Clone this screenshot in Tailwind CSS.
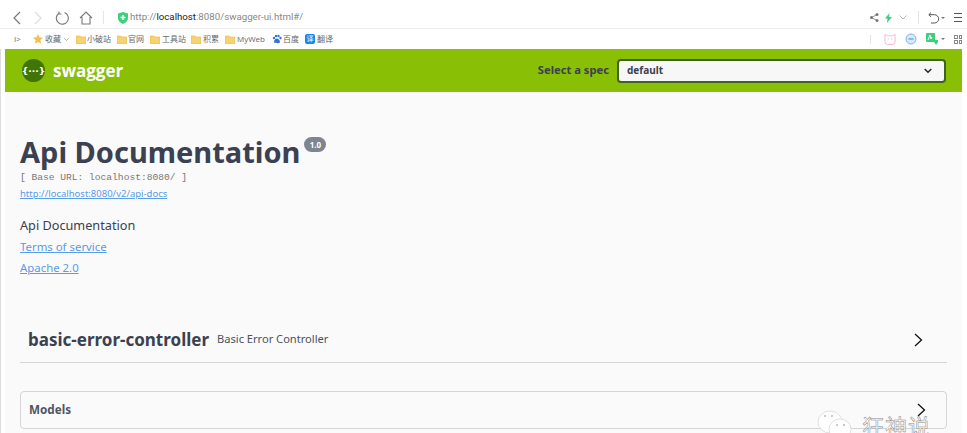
<!DOCTYPE html>
<html>
<head>
<meta charset="utf-8">
<title>Swagger UI</title>
<script src="https://cdn.jsdelivr.net/npm/@tailwindcss/browser@4"></script>
</head>
<body class="bg-white h-[433px] w-[967px] overflow-hidden relative font-['Open_Sans','Noto_Sans_CJK_SC',sans-serif]">
  <!-- browser toolbar -->
  <div class="h-[29px] flex items-center border-b border-[#eeeeee] pl-[12px] pr-[5px] pt-[7px]">
    <svg class="w-[10px] h-[14px] mr-[11px]" viewBox="0 0 10 14" fill="none" stroke="#777" stroke-width="1.2"><path d="M8 1 2 7l6 6"/></svg>
    <svg class="w-[10px] h-[14px] mr-[12px]" viewBox="0 0 10 14" fill="none" stroke="#ddd" stroke-width="1.2"><path d="M2 1l6 6-6 6"/></svg>
    <svg class="w-[14px] h-[14px] mr-[10px]" viewBox="0 0 14 14" fill="none" stroke="#777" stroke-width="1.1"><path d="M4 2.2A6 6 0 1 0 9.500 1.600M4 0.500v2.500h2.500"/></svg>
    <svg class="w-[14px] h-[14px] mr-[10px]" viewBox="0 0 14 14" fill="none" stroke="#777" stroke-width="1.1"><path d="M1 7 7 1l6 6M3 6v7h8V6"/></svg>
    <div class="w-px h-[13px] bg-[#e5e5e5] mr-[14px]"></div>
    <svg class="w-[10px] h-[12px] mr-[2px]" viewBox="0 0 10 12"><path d="M5 0 10 1.500V6c0 3-2.500 5-5 6-2.500-1-5-3-5-6V1.500z" fill="#3ccf7c"/><path d="M5 3v5M2.500 5.500h5" stroke="#fff" stroke-width="1.500"/></svg>
    <span class="text-[9.700px] text-[#888] font-['Roboto',sans-serif] whitespace-nowrap">http://<span class="text-[#222]">localhost</span>:8080/swagger-ui.html#/</span>
    <div class="ml-auto flex items-center">
      <svg class="w-[9px] h-[9px] mr-[6px]" viewBox="0 0 9 9" fill="#777"><circle cx="7" cy="1.500" r="1.500"/><circle cx="7" cy="7.500" r="1.500"/><circle cx="1.500" cy="4.500" r="1.500"/><path d="M1.500 4.500 7 1.500M1.500 4.500 7 7.500" stroke="#777" stroke-width=".8"/></svg>
      <svg class="w-[7px] h-[10px] mr-[7px]" viewBox="0 0 7 10" fill="#3ccf7c"><path d="M4.500 0 0 5.500h2.500L2 10l5-6H4z"/></svg>
      <svg class="w-[8px] h-[5px] mr-[11px]" viewBox="0 0 8 5" fill="none" stroke="#bbb"><path d="M.5.500 4 4 7.500.500"/></svg>
      <div class="w-px h-[13px] bg-[#e5e5e5] mr-[9px]"></div>
      <svg class="w-[11px] h-[12px] mr-[2px]" viewBox="0 0 11 12" fill="none" stroke="#555" stroke-width="1"><path d="M3 .500.800 2.700 3 4.800M1 2.700h5.500a4 4 0 0 1 0 8.300H3"/></svg>
      <span class="w-0 h-0 border-x-[2px] border-t-[2px] border-x-transparent border-t-[#777] mr-[9px]"></span>
      <div class="flex flex-col gap-[3px] w-[8px]"><span class="h-px bg-[#555]"></span><span class="h-px bg-[#555]"></span><span class="h-px bg-[#555]"></span></div>
    </div>
  </div>
  <!-- bookmarks bar -->
  <div class="h-[20px] flex items-center pl-[14px] text-[8px] text-[#666] whitespace-nowrap">
    <span class="w-[19px] text-[8px]">I&gt;</span>
    <svg class="w-[10px] h-[10px] mr-[2px]" viewBox="0 0 10 10"><path d="M5 0l1.500 3.300 3.500.400-2.600 2.400.700 3.600L5 8 1.900 9.700l.7-3.600L0 3.700l3.500-.400z" fill="#f5c04a"/></svg>
    <span class="mr-[3px]">收藏</span>
    <svg class="w-[5px] h-[3px] mr-[7px]" viewBox="0 0 5 3" fill="none" stroke="#999" stroke-width=".8"><path d="M.3.300 2.500 2.500 4.700.300"/></svg>
    <svg class="w-[10px] h-[9px] mr-[1px]" viewBox="0 0 10 9"><path d="M0 1h4l1 1h5v7H0z" fill="#f7d26e" stroke="#e8b84a" stroke-width=".6"/></svg><span class="mr-[6px]">小破站</span>
    <svg class="w-[10px] h-[9px] mr-[1px]" viewBox="0 0 10 9"><path d="M0 1h4l1 1h5v7H0z" fill="#f7d26e" stroke="#e8b84a" stroke-width=".6"/></svg><span class="mr-[6px]">官网</span>
    <svg class="w-[10px] h-[9px] mr-[2px]" viewBox="0 0 10 9"><path d="M0 1h4l1 1h5v7H0z" fill="#f7d26e" stroke="#e8b84a" stroke-width=".6"/></svg><span class="mr-[5px]">工具站</span>
    <svg class="w-[10px] h-[9px] mr-[2px]" viewBox="0 0 10 9"><path d="M0 1h4l1 1h5v7H0z" fill="#f7d26e" stroke="#e8b84a" stroke-width=".6"/></svg><span class="mr-[6px]">积累</span>
    <svg class="w-[10px] h-[9px] mr-[2px]" viewBox="0 0 10 9"><path d="M0 1h4l1 1h5v7H0z" fill="#f7d26e" stroke="#e8b84a" stroke-width=".6"/></svg><span class="mr-[7px]">MyWeb</span>
    <svg class="w-[10px] h-[10px] mr-[1px]" viewBox="0 0 10 10" fill="#3a6fd8"><circle cx="2" cy="4" r="1.200"/><circle cx="4" cy="2" r="1.200"/><circle cx="6.500" cy="2" r="1.200"/><circle cx="8.500" cy="4" r="1.200"/><path d="M5 4.500c2 0 3 2.500 3 3.500S6.500 9.500 5 9s-3 .500-3-1 1-3.500 3-3.500z"/></svg><span class="mr-[6px]">百度</span>
    <span class="w-[10px] h-[10px] bg-[#1787f0] rounded-[2px] text-white text-[7px] leading-[10px] text-center mr-[2px]">译</span><span>翻译</span>
    <div class="ml-auto flex items-center pr-[3px]">
      <div class="w-px h-[9px] bg-[#e5e5e5] mr-[13px]"></div>
      <svg class="w-[12px] h-[13px] mr-[9px]" viewBox="0 0 13 13" fill="none" stroke="#f6b6c8" stroke-width="1"><path d="M1 1l3 1.500h5L12 1v8a3 3 0 0 1-3 3H4a3 3 0 0 1-3-3z"/><path d="M4 6h1.500M7.500 6H9" /></svg>
      <svg class="w-[12px] h-[12px] mr-[9px]" viewBox="0 0 12 12"><circle cx="6" cy="6" r="5" fill="#d8e9fb" stroke="#7fb5ee"/><path d="M3.500 6h5" stroke="#5a9ae6" stroke-width="1.200"/></svg>
      <svg class="w-[12px] h-[12px] mr-[3px]" viewBox="0 0 12 12"><rect width="9" height="9" rx="1" fill="#3ccf7c"/><path d="M8 7h4v2l-2 3-2-3z" fill="#3ccf7c"/><path d="M2 7 4 2l1 4 1-2" stroke="#fff" fill="none"/></svg>
      <span class="w-0 h-0 border-x-[2px] border-t-[2px] border-x-transparent border-t-[#777] mr-[9px]"></span>
      <div class="grid grid-cols-2 gap-px w-[8px] mr-[2px]"><span class="h-[4px] border border-[#888]"></span><span class="h-[4px] border border-[#888]"></span><span class="h-[4px] border border-[#888]"></span><span class="h-[4px] border border-[#888]"></span></div>
    </div>
  </div>
  <!-- page -->
  <div class="border-l border-[#dddddd] pl-[4px] pr-[5px]">
  <div class="h-[384px] bg-[#fafafa] overflow-hidden">
    <div class="h-[43px] bg-[#89bf04] flex items-center pl-[17px] pr-[16px]">
      <svg class="w-[23px] h-[23px] mr-[8px]" viewBox="0 0 25 25"><circle cx="12.500" cy="12.500" r="12.500" fill="#417505"/><text x="12.500" y="16" text-anchor="middle" font-size="10" font-family="DejaVu Sans" fill="#fff" font-weight="bold">{···}</text></svg>
      <span class="text-white text-[17px] font-bold font-['Open_Sans',sans-serif]">swagger</span>
      <span class="ml-auto mr-[8px] text-[#3b4151] text-[11.200px] font-bold font-['Noto_Sans',sans-serif]">Select a spec</span>
      <div class="w-[329px] h-[24px] bg-[#f7f7f7] border-2 border-[#41611f] rounded-[4px] flex items-center pl-[8px] pr-[12px] text-[#3b4151] text-[10px] font-bold font-['Noto_Sans',sans-serif]">
        default
        <svg class="ml-auto w-[8px] h-[6px]" viewBox="0 0 8 6" fill="none" stroke="#222" stroke-width="1.400"><path d="M.7 1 4 4.300 7.300 1"/></svg>
      </div>
    </div>
    <div class="pl-[15px] pr-[15px]">
      <div class="flex items-start pt-[39px] h-[80px]">
        <h1 class="text-[29px] leading-[41px] font-bold text-[#3b4151] font-['Noto_Sans',sans-serif]">Api Documentation</h1>
        <span class="mt-[6px] ml-[4px] h-[15px] w-[22px] rounded-full bg-[#7d8492] text-white text-[8px] font-bold leading-[15px] text-center font-['Noto_Sans',sans-serif]">1.0</span>
      </div>
      <div class="h-[15px] text-[9.600px] leading-[12px] text-[#777777] font-['Liberation_Mono',monospace] whitespace-pre">[ Base URL: localhost:8080/ ]</div>
      <a class="block h-[14px] text-[9.500px] leading-[14px] text-[#5b9be8] underline font-['Noto_Sans',sans-serif]">http://localhost:8080/v2/api-docs</a>
      <div class="mt-[15px] text-[12.700px] leading-[18px] text-[#3b4151] font-['Noto_Sans',sans-serif]">Api Documentation</div>
      <a class="block mt-[4px] text-[11.400px] leading-[18px] text-[#5b9be8] underline font-['Noto_Sans',sans-serif]">Terms of service</a>
      <a class="block mt-[3px] text-[11.400px] leading-[18px] text-[#5b9be8] underline font-['Noto_Sans',sans-serif]">Apache 2.0</a>
      <div class="mt-[39px] h-[47px] border-b border-[#d4d5d8] flex items-center pl-[8px] pr-[24px] pt-[1px]">
        <span class="text-[17px] font-bold text-[#3b4151] font-['Noto_Sans',sans-serif]">basic-error-controller</span>
        <span class="ml-[8px] text-[11.100px] text-[#4b5161] font-['Noto_Sans',sans-serif]">Basic Error Controller</span>
        <svg class="ml-auto w-[9px] h-[14px]" viewBox="0 0 9 14" fill="none" stroke="#111" stroke-width="1.300"><path d="M1 1l6.500 6L1 13"/></svg>
      </div>
      <div class="mt-[28px] h-[38px] border border-[#d4d5d8] rounded-[4px] flex items-center pl-[8px] pr-[20px]">
        <span class="text-[11.700px] font-bold text-[#505562] font-['Noto_Sans',sans-serif]">Models</span>
        <svg class="ml-auto w-[9px] h-[14px]" viewBox="0 0 9 14" fill="none" stroke="#111" stroke-width="1.300"><path d="M1 1l6.500 6L1 13"/></svg>
      </div>
    </div>
  </div>
  </div>
  <!-- watermark -->
  <div class="absolute left-[817px] top-[409px] flex items-start">
    <svg class="w-[36px] h-[30px]" viewBox="0 0 36 30"><ellipse cx="13" cy="13" rx="12" ry="11" fill="#fff" stroke="#ccc" stroke-width=".6"/><ellipse cx="23" cy="20" rx="11" ry="10" fill="#fff" stroke="#ccc" stroke-width=".6"/><circle cx="20" cy="16" r="1" fill="#bbb"/><circle cx="27" cy="16" r="1" fill="#bbb"/><circle cx="8" cy="7" r="1" fill="#bbb"/><circle cx="15" cy="7" r="1" fill="#bbb"/></svg>
    <span class="ml-[9px] mt-[3px] text-[22px] leading-[26px] text-white [-webkit-text-stroke:0.5px_#888] font-['Noto_Sans_CJK_SC',sans-serif] tracking-[1px] whitespace-nowrap">狂神说</span>
  </div>
</body>
</html>
